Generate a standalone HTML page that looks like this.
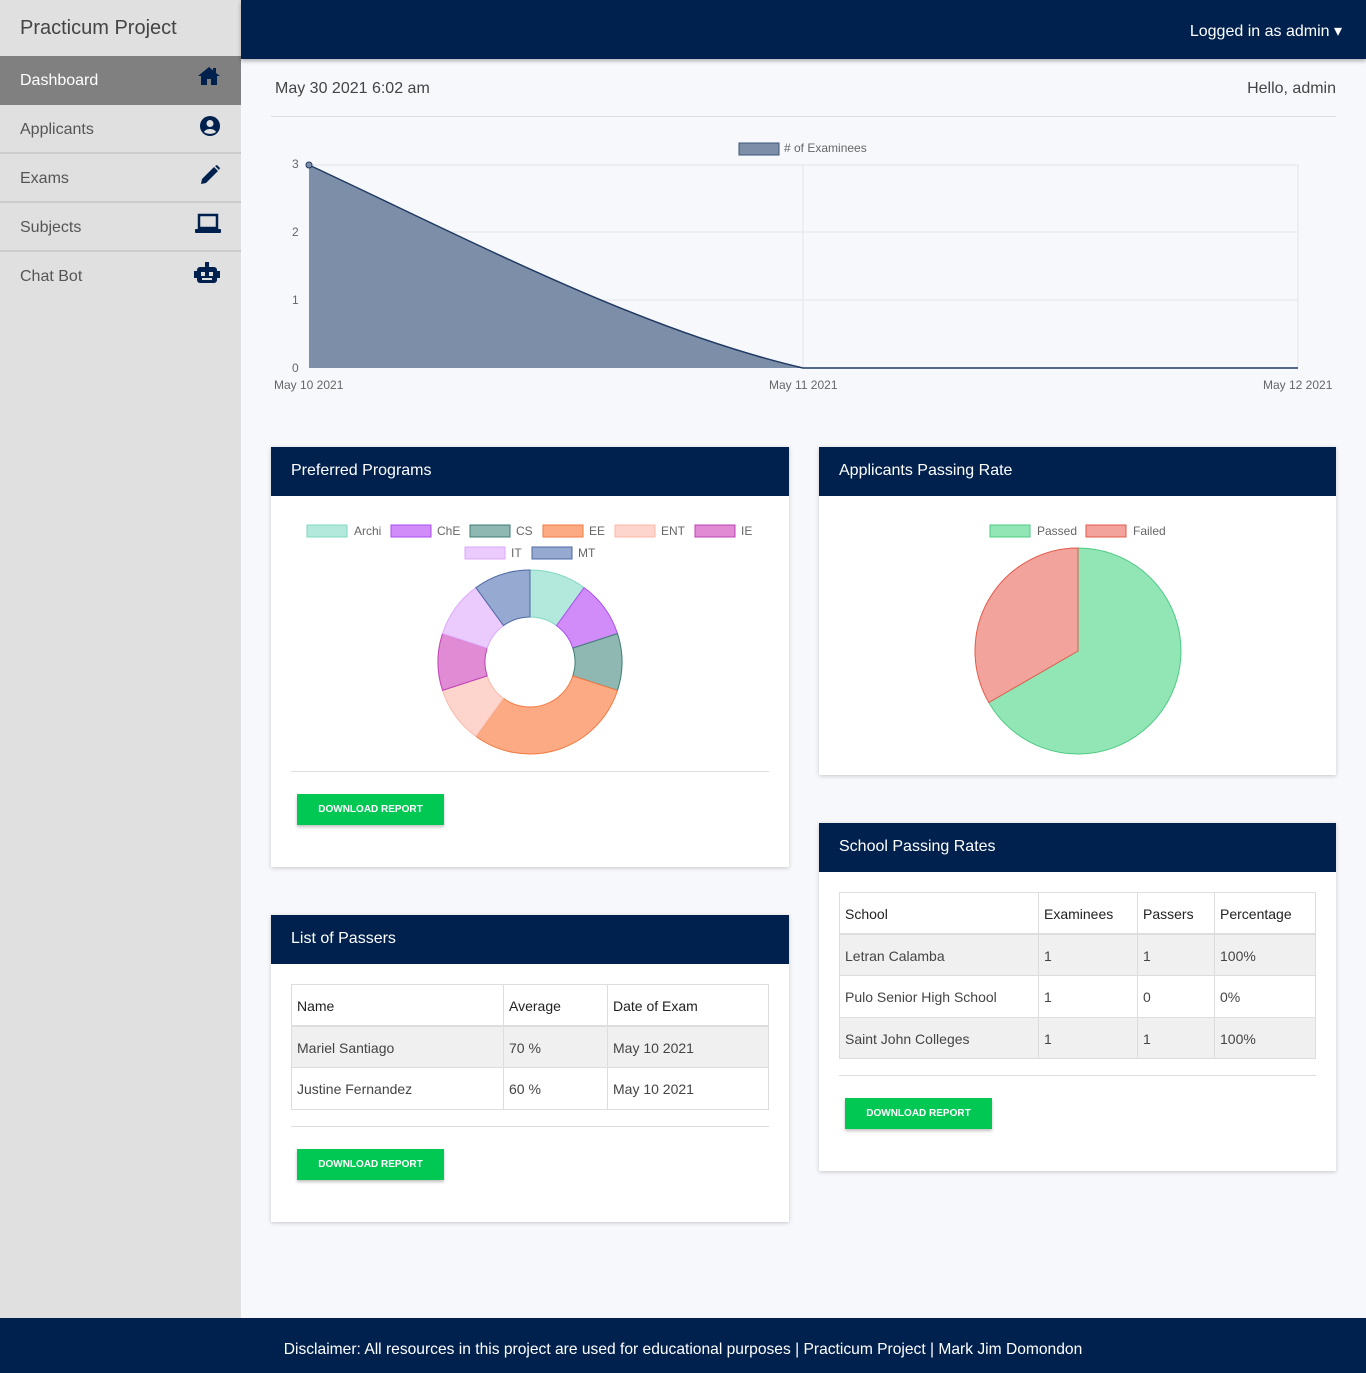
<!DOCTYPE html>
<html><head><meta charset="utf-8"><style>
*{box-sizing:border-box;margin:0;padding:0}
body{width:1366px;height:1373px;position:relative;background:#f7f8fc;font-family:"Liberation Sans",sans-serif;overflow:hidden;color:#333}
.side{position:absolute;left:0;top:0;width:241px;height:1318px;background:#e0e0e0}
.brand{height:56px;padding:17px 20px;font-size:20px;color:#444;font-weight:300}
.nav{height:49px;border-bottom:2px solid #ccc;position:relative;padding:16px 20px 0;font-size:16px;color:#555}
.nav.last{border-bottom:none}
.nav.act{background:#808080;color:#fff;border:none;height:49px}
.nav svg{position:absolute;right:20px;top:10px}
.top{position:absolute;left:241px;top:0;right:0;height:59px;background:#00214d;box-shadow:0 2px 4px rgba(0,0,0,.3)}
.top span{position:absolute;right:24px;top:21px;color:#fff;font-size:16px}
.foot{position:absolute;left:0;right:0;top:1318px;height:55px;background:#00214d;color:#fff;font-size:15.6px;text-align:center;padding-top:23px}
.card{position:absolute;background:#fff;box-shadow:0 1px 4px rgba(0,0,0,.2)}
.card h3{background:#00214d;color:#fff;font-weight:normal;font-size:16px;height:49px;padding:15px 20px 0}
.btn{position:absolute;background:#00c853;color:#fff;font-size:10px;font-weight:bold;width:147px;height:31px;text-align:center;line-height:32px;box-shadow:0 2px 3px rgba(0,0,0,.25)}
.hr{position:absolute;left:20px;right:20px;height:1px;background:#ddd}
table{position:absolute;border-collapse:collapse;font-size:14px;color:#444}
td{border:1px solid #ddd;height:41.5px;padding:2px 5px 0}
tr.h td{color:#222;border-bottom:2px solid #ddd}
tr.g td{background:#f0f0f0}
</style></head><body>
<div class="side">
<div class="brand">Practicum Project</div>
<div class="nav act">Dashboard<svg width="24" height="20" viewBox="0 0 24 20"><path d="M12 1L1 10h3v9h6v-6h4v6h6v-9h3L19 7V2h-3v2.5z" fill="#00214d"/></svg></div>
<div class="nav">Applicants<svg width="22" height="22" viewBox="0 0 22 22"><circle cx="11" cy="11" r="10" fill="#00214d"/><circle cx="11" cy="8.5" r="3.5" fill="#e0e0e0"/><path d="M5 17c2-4 10-4 12 0c-3 2.5-9 2.5-12 0z" fill="#e0e0e0"/></svg></div>
<div class="nav">Exams<svg width="22" height="22" viewBox="0 0 22 22"><path d="M2 20l1-5L15 3l4 4L7 19z M16 2l2-1l3 3l-1 2z" fill="#00214d"/></svg></div>
<div class="nav">Subjects<svg width="26" height="22" viewBox="0 0 26 22"><rect x="4" y="2" width="18" height="13" fill="none" stroke="#00214d" stroke-width="2.5"/><rect x="0" y="16" width="26" height="4" rx="1" fill="#00214d"/></svg></div>
<div class="nav last">Chat Bot<svg width="28" height="22" viewBox="0 0 28 22"><rect x="4" y="5" width="20" height="16" rx="3" fill="#00214d"/><rect x="12" y="0" width="4" height="5" fill="#00214d"/><rect x="1" y="9" width="3" height="7" fill="#00214d"/><rect x="24" y="9" width="3" height="7" fill="#00214d"/><rect x="8" y="10" width="4" height="4" fill="#e0e0e0"/><rect x="16" y="10" width="4" height="4" fill="#e0e0e0"/><rect x="9" y="16" width="10" height="2" fill="#e0e0e0"/></svg></div>
</div>
<div class="top"><span>Logged in as admin &#9662;</span></div>
<div style="position:absolute;left:275px;top:80px;font-size:16px;color:#444">May 30 2021 6:02 am</div>
<div style="position:absolute;right:30px;top:80px;font-size:16px;color:#444">Hello, admin</div>
<div style="position:absolute;left:271px;right:30px;top:116px;height:1px;background:#ddd"></div>
<svg style="position:absolute;left:0;top:0" width="1366" height="400" font-family="Liberation Sans, sans-serif" font-size="12" fill="#666">
<rect x="739" y="143" width="40" height="12" fill="#7d8ea8" stroke="#3e5577"/><text x="784" y="152">  # of Examinees</text>
<g stroke="#e5e5e5"><line x1="309" y1="165" x2="1298" y2="165"/><line x1="309" y1="232" x2="1298" y2="232"/><line x1="309" y1="300" x2="1298" y2="300"/><line x1="803" y1="165" x2="803" y2="368"/><line x1="1298" y1="165" x2="1298" y2="368"/></g>
<path d="M309 165 C470 240 640 330 803 368 L1298 368 L1298 368 L309 368Z" fill="#7d8ea8"/>
<path d="M309 165 C470 240 640 330 803 368 L1298 368" fill="none" stroke="#1f3a63" stroke-width="1.5"/>
<circle cx="309" cy="165" r="3" fill="#7d8ea8" stroke="#1f3a63"/>
<text x="292" y="168">3</text><text x="292" y="236">2</text><text x="292" y="304">1</text><text x="292" y="372">0</text>
<text x="274" y="389">May 10 2021</text><text x="769" y="389">May 11 2021</text><text x="1263" y="389">May 12 2021</text>
</svg>

<div class="card" style="left:271px;top:447px;width:518px;height:420px"><h3>Preferred Programs</h3>
<div class="hr" style="top:324px"></div><div class="btn" style="left:26px;top:347px">DOWNLOAD REPORT</div></div>
<svg style="position:absolute;left:271px;top:496px" width="518" height="270" font-family="Liberation Sans, sans-serif" font-size="12" fill="#666">
<g transform="translate(-271,-496)">
<rect x="307" y="525" width="40" height="12" fill="#b3e9dc" stroke="#80d8c0"/><text x="354" y="535">Archi</text>
<rect x="391" y="525" width="40" height="12" fill="#d18cfa" stroke="#a94ef5"/><text x="437" y="535">ChE</text>
<rect x="470" y="525" width="40" height="12" fill="#8fb8b2" stroke="#3d7d74"/><text x="516" y="535">CS</text>
<rect x="543" y="525" width="40" height="12" fill="#fbaa84" stroke="#f37a40"/><text x="589" y="535">EE</text>
<rect x="615" y="525" width="40" height="12" fill="#fdd5cc" stroke="#fbb8a8"/><text x="661" y="535">ENT</text>
<rect x="695" y="525" width="40" height="12" fill="#e08bd3" stroke="#c140b6"/><text x="741" y="535">IE</text>
<rect x="465" y="547" width="40" height="12" fill="#ebcafd" stroke="#dba8fb"/><text x="511" y="557">IT</text>
<rect x="532" y="547" width="40" height="12" fill="#96a9d0" stroke="#4c69a4"/><text x="578" y="557">MT</text>
<path d="M530 570 A92 92 0 0 1 584.1 587.6 L556.5 625.6 A45 45 0 0 0 530 617Z" fill="#b3e9dc" stroke="#80d8c0"/>
<path d="M584.1 587.6 A92 92 0 0 1 617.5 633.6 L572.8 648.1 A45 45 0 0 0 556.5 625.6Z" fill="#d18cfa" stroke="#a94ef5"/>
<path d="M617.5 633.6 A92 92 0 0 1 617.5 690.4 L572.8 675.9 A45 45 0 0 0 572.8 648.1Z" fill="#8fb8b2" stroke="#3d7d74"/>
<path d="M617.5 690.4 A92 92 0 0 1 475.9 736.4 L503.5 698.4 A45 45 0 0 0 572.8 675.9Z" fill="#fbaa84" stroke="#f37a40"/>
<path d="M475.9 736.4 A92 92 0 0 1 442.5 690.4 L487.2 675.9 A45 45 0 0 0 503.5 698.4Z" fill="#fdd5cc" stroke="#fbb8a8"/>
<path d="M442.5 690.4 A92 92 0 0 1 442.5 633.6 L487.2 648.1 A45 45 0 0 0 487.2 675.9Z" fill="#e08bd3" stroke="#c140b6"/>
<path d="M442.5 633.6 A92 92 0 0 1 475.9 587.6 L503.5 625.6 A45 45 0 0 0 487.2 648.1Z" fill="#ebcafd" stroke="#dba8fb"/>
<path d="M475.9 587.6 A92 92 0 0 1 530 570 L530 617 A45 45 0 0 0 503.5 625.6Z" fill="#96a9d0" stroke="#4c69a4"/>
</g></svg>

<div class="card" style="left:819px;top:447px;width:517px;height:328px"><h3>Applicants Passing Rate</h3></div>
<svg style="position:absolute;left:819px;top:496px" width="517" height="270" font-family="Liberation Sans, sans-serif" font-size="12" fill="#666">
<g transform="translate(-819,-496)">
<rect x="990" y="525" width="40" height="12" fill="#92e5b5" stroke="#4ccb83"/><text x="1037" y="535">Passed</text>
<rect x="1086" y="525" width="40" height="12" fill="#f2a39b" stroke="#e35a4c"/><text x="1133" y="535">Failed</text>
<path d="M1078 651 L1078 548 A103 103 0 1 1 988.8 702.5Z" fill="#92e5b5" stroke="#4ccb83"/>
<path d="M1078 651 L988.8 702.5 A103 103 0 0 1 1078 548Z" fill="#f2a39b" stroke="#e35a4c"/>
</g></svg>

<div class="card" style="left:819px;top:823px;width:517px;height:348px"><h3>School Passing Rates</h3>
<table style="left:20px;top:69px;width:477px"><tr class="h"><td style="width:199px">School</td><td style="width:99px">Examinees</td><td style="width:77px">Passers</td><td>Percentage</td></tr>
<tr class="g"><td>Letran Calamba</td><td>1</td><td>1</td><td>100%</td></tr>
<tr><td>Pulo Senior High School</td><td>1</td><td>0</td><td>0%</td></tr>
<tr class="g"><td>Saint John Colleges</td><td>1</td><td>1</td><td>100%</td></tr></table>
<div class="hr" style="top:252px"></div><div class="btn" style="left:26px;top:275px">DOWNLOAD REPORT</div></div>

<div class="card" style="left:271px;top:915px;width:518px;height:307px"><h3>List of Passers</h3>
<table style="left:20px;top:69px;width:478px"><tr class="h"><td style="width:212px">Name</td><td style="width:104px">Average</td><td>Date of Exam</td></tr>
<tr class="g"><td>Mariel Santiago</td><td>70 %</td><td>May 10 2021</td></tr>
<tr><td>Justine Fernandez</td><td>60 %</td><td>May 10 2021</td></tr></table>
<div class="hr" style="top:211px"></div><div class="btn" style="left:26px;top:234px">DOWNLOAD REPORT</div></div>

<div class="foot">Disclaimer: All resources in this project are used for educational purposes | Practicum Project | Mark Jim Domondon</div>
</body></html>
